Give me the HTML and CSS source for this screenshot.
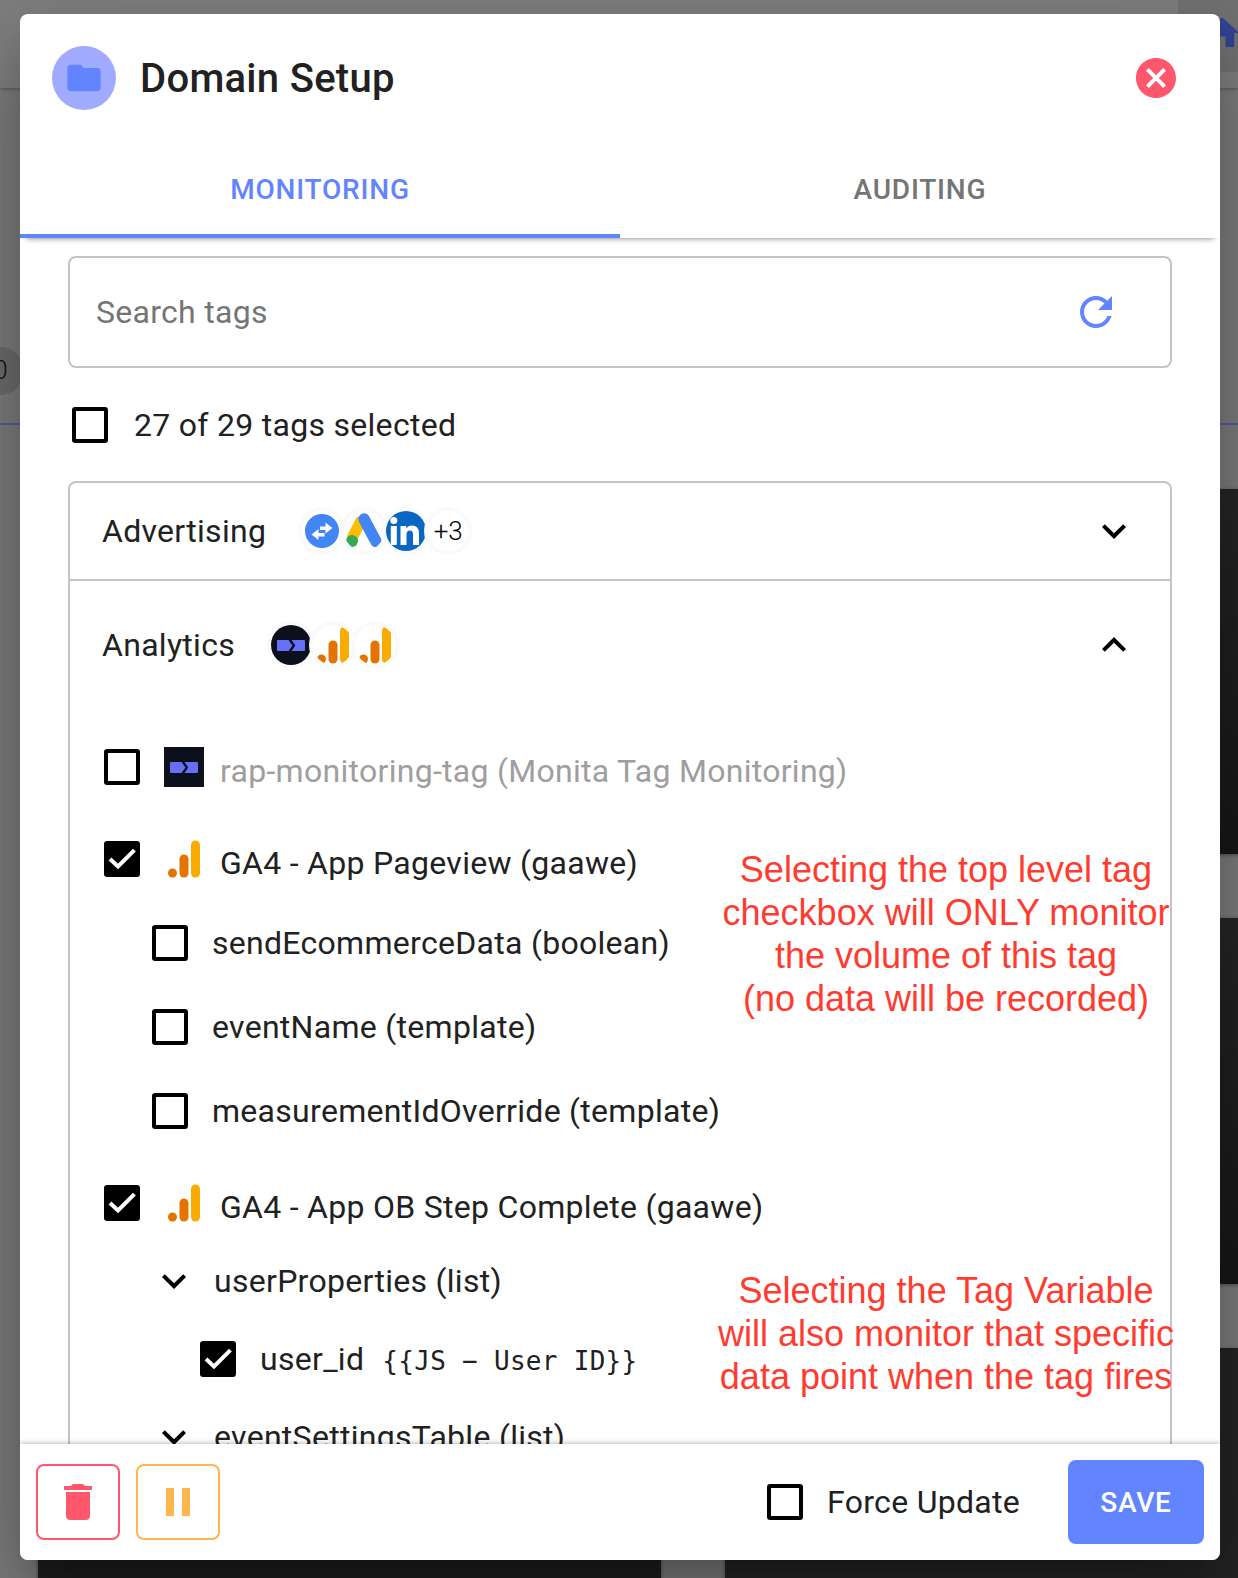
FILE: index.html
```
<!DOCTYPE html>
<html lang="en">
<head>
<meta charset="utf-8">
<title>Domain Setup</title>
<link rel="stylesheet" href="styles.css">
</head>
<body>
<svg class="defs" aria-hidden="true">
  <symbol id="box" viewBox="0 0 24 24"><rect x="4" y="4" width="16" height="16" rx=".6" fill="none" stroke="#000" stroke-width="2"/></symbol>
  <symbol id="boxon" viewBox="0 0 24 24"><rect x="3" y="3" width="18" height="18" rx="1.6"/><path d="M6 12l4 3.700 8.200-8.100" fill="none" stroke="#fff" stroke-width="2"/></symbol>
  <symbol id="down" viewBox="0 0 24 24"><path d="M7.41 8.59L12 13.17l4.59-4.58L18 10l-6 6-6-6 1.41-1.41z"/></symbol>
  <symbol id="up" viewBox="0 0 24 24"><path d="M7.41 15.41L12 10.83l4.59 4.58L18 14l-6-6-6 6z"/></symbol>
  <symbol id="ga" viewBox="0 0 40 40"><rect x="27" y="1.5" width="9" height="37" rx="4.5" fill="#f9ab00"/><rect x="15.5" y="15.5" width="9" height="23" rx="4.5" fill="#e37400"/><circle cx="8.5" cy="34" r="4.5" fill="#e37400"/></symbol>
  <symbol id="monita" viewBox="0 0 40 40"><rect width="40" height="40" fill="#0b101c"/><path d="M7 15h10.5l4 5.500-4 5.500H7q-1 0-1-1v-9q0-1 1-1zM20.500 15H33q1 0 1 1v9q0 1-1 1H20.500l3.800-5.500z" fill="#6670f6"/></symbol>
</svg>
<div class="backdrop">
  <div class="page-top"></div>
  <div class="page-user"></div>
  <svg class="home" viewBox="0 0 24 24"><path d="M10 20v-6h4v6h5v-8h3L12 3 2 12h3v8z"/></svg>
  <div class="chip">0</div>
  <div class="page-line"></div>
  <div class="tile t1"></div><div class="tile t2"></div><div class="tile t3"></div><div class="tile t4"></div>
</div>
<main class="dialog">
  <header class="head">
    <span class="badge"><svg viewBox="0 0 24 24"><path d="M10 4H4c-1.100 0-1.990.9-1.990 2L2 18c0 1.100.9 2 2 2h16c1.100 0 2-.9 2-2V8c0-1.100-.9-2-2-2h-8l-2-2z"/></svg></span>
    <h1>Domain Setup</h1>
    <svg class="close" viewBox="0 0 24 24"><path d="M12 2C6.470 2 2 6.470 2 12s4.470 10 10 10 10-4.470 10-10S17.530 2 12 2zm5 13.590L15.590 17 12 13.410 8.410 17 7 15.590 10.590 12 7 8.410 8.410 7 12 10.590 15.590 7 17 8.410 13.410 12 17 15.590z"/></svg>
  </header>
  <nav class="tabs"><span class="tab active">MONITORING</span><span class="tab">AUDITING</span></nav>
  <section class="content">
    <div class="search"><span>Search tags</span><svg class="ic blue" viewBox="0 0 24 24"><path d="M17.650 6.350C16.200 4.900 14.210 4 12 4c-4.420 0-7.990 3.580-7.990 8s3.570 8 7.990 8c3.730 0 6.840-2.550 7.730-6h-2.080c-.82 2.330-3.040 4-5.650 4-3.310 0-6-2.690-6-6s2.690-6 6-6c1.660 0 3.140.69 4.220 1.780L13 11h7V4l-2.350 2.350z"/></svg></div>
    <div class="all"><svg class="ic"><use href="#box"/></svg><span>27 of 29 tags selected</span></div>
    <div class="groups">
      <div class="group adv">
        <span class="name">Advertising</span>
        <div class="avatars">
          <span class="av"><svg viewBox="0 0 40 40"><circle cx="20" cy="20" r="17" fill="#4285f4"/><path d="M23.500 11.500l7 5.500-7 5.500v-3.500h-5.500v-3.500h5.500zM16.500 18l-7 5.500 7 5.500v-3.500h6v-3.500h-6z" fill="#fff"/></svg></span>
          <span class="av"><svg viewBox="0 0 40 40"><path d="M18 8L7.500 28" stroke="#fbbc04" stroke-width="11"/><path d="M20 8L32 30.500" stroke="#4285f4" stroke-width="11.500" stroke-linecap="round"/><circle cx="8" cy="30" r="6" fill="#34a853"/></svg></span>
          <span class="av"><svg viewBox="0 0 40 40"><rect width="40" height="40" fill="#0a66c2"/><g fill="#fff"><circle cx="7.800" cy="9.500" r="3.500"/><path d="M4.800 15h6v19h-6zM14.500 15h5.700v2.600q2-3.100 5.700-3.100 7.100 0 7.100 8V34h-6V23.800q0-4.200-3-4.200-3.500 0-3.500 4.200V34h-6z"/></g></svg></span>
          <span class="av more">+3</span>
        </div>
        <svg class="ic end"><use href="#down"/></svg>
      </div>
      <div class="group ana">
        <span class="name">Analytics</span>
        <div class="avatars">
          <span class="av"><svg><use href="#monita"/></svg></span>
          <span class="av"><svg><use href="#ga"/></svg></span>
          <span class="av"><svg><use href="#ga"/></svg></span>
        </div>
        <svg class="ic end"><use href="#up"/></svg>
      </div>
      <div class="rows">
        <div class="row tag"><svg class="ic"><use href="#box"/></svg><svg class="logo"><use href="#monita"/></svg><span class="muted">rap-monitoring-tag (Monita Tag Monitoring)</span></div>
        <div class="row tag first"><svg class="ic"><use href="#boxon"/></svg><svg class="logo"><use href="#ga"/></svg><span>GA4 - App Pageview (gaawe)</span></div>
        <div class="row field"><svg class="ic"><use href="#box"/></svg><span>sendEcommerceData (boolean)</span></div>
        <div class="row field"><svg class="ic"><use href="#box"/></svg><span>eventName (template)</span></div>
        <div class="row field"><svg class="ic"><use href="#box"/></svg><span>measurementIdOverride (template)</span></div>
        <div class="row tag second"><svg class="ic"><use href="#boxon"/></svg><svg class="logo"><use href="#ga"/></svg><span>GA4 - App OB Step Complete (gaawe)</span></div>
        <div class="row list"><svg class="ic"><use href="#down"/></svg><span>userProperties (list)</span></div>
        <div class="row leaf"><svg class="ic"><use href="#boxon"/></svg><span>user_id</span><code>{{JS − User ID}}</code></div>
        <div class="row list"><svg class="ic"><use href="#down"/></svg><span>eventSettingsTable (list)</span></div>
      </div>
    </div>
  </section>
  <footer class="foot">
    <span class="btn red"><svg class="ic" viewBox="0 0 24 24"><path d="M6 19c0 1.100.9 2 2 2h8c1.100 0 2-.9 2-2V7H6v12zM19 4h-3.500l-1-1h-5l-1 1H5v2h14V4z"/></svg></span>
    <span class="btn amber"><svg class="ic" viewBox="0 0 24 24"><path d="M6 19h4V5H6v14zm8-14v14h4V5h-4z"/></svg></span>
    <div class="force"><svg class="ic"><use href="#box"/></svg><span>Force Update</span></div>
    <span class="save">SAVE</span>
  </footer>
</main>
<p class="note n1"><span>Selecting the top level tag</span><span>checkbox will ONLY monitor</span><span>the volume of this tag</span><span>(no data will be recorded)</span></p>
<p class="note n2"><span>Selecting the Tag Variable</span><span>will also monitor that specific</span><span>data point when the tag fires</span></p>
</body>
</html>
```
FILE: styles.css
```
* { box-sizing: border-box; }
body { margin: 0; width: 1238px; height: 1578px; overflow: hidden; position: relative; padding: 14px 18px 18px 20px; background: #7c7c7c; font-family: Roboto, sans-serif; font-size: 32px; letter-spacing: .29px; color: #212121; }
svg { display: block; flex: none; }
.defs { position: absolute; width: 0; height: 0; }

.backdrop { position: absolute; inset: 0; overflow: hidden; background: #7c7c7c; }
.backdrop > * { position: absolute; }
.page-top { left: 0; top: 0; width: 100%; height: 88px; background: #7f7f7f; box-shadow: 0 1px 4px rgba(0,0,0,.3); }
.page-user { left: 1178px; top: 0; width: 60px; height: 72px; background: #727272; }
.home { left: 1201px; top: 12px; width: 42px; height: 42px; fill: #314496; }
.chip { left: -56px; top: 347px; width: 80px; height: 48px; border-radius: 24px; background: #6c6c6c; color: #111; font-size: 26px; font-weight: 300; line-height: 47px; text-align: right; padding-right: 16px; }
.page-line { left: 0; top: 423px; width: 100%; height: 2px; background: #535ba3; }
.tile { background: #242424; box-shadow: 0 1px 4px rgba(0,0,0,.4); }
.t1 { left: 725px; top: 489px; width: 600px; height: 365px; background: linear-gradient(#262626, #171717); }
.t2 { left: 725px; top: 918px; width: 600px; height: 366px; background: linear-gradient(#262626, #171717); }
.t3 { left: 725px; top: 1348px; width: 600px; height: 300px; }
.t4 { left: 38px; top: 1348px; width: 623px; height: 300px; background: #1e1e1e; }

.dialog { position: relative; width: 1200px; height: 1546px; display: flex; flex-direction: column; overflow: hidden; border-radius: 8px; background: #fff; box-shadow: 0 22px 30px -14px rgba(0,0,0,.2), 0 48px 76px 6px rgba(0,0,0,.14), 0 18px 92px 16px rgba(0,0,0,.12); }
.ic { width: 48px; height: 48px; }
.blue { fill: #6285ff; }
.head { height: 128px; display: flex; align-items: center; padding: 0 40px 0 32px; }
.badge { width: 64px; height: 64px; border-radius: 50%; background: #a0abff; display: grid; place-items: center; }
.badge svg { width: 40px; height: 40px; fill: #6285ff; }
h1 { flex: 1; margin: 0 0 0 24px; padding-top: 1px; font-size: 40px; font-weight: 500; line-height: 64px; }
.close { width: 48px; height: 48px; fill: #ff586d; }
.tabs { height: 96px; flex: none; display: flex; z-index: 1; background: #fff; box-shadow: 0 6px 6px -6px rgba(0,0,0,.55); }
.tab { flex: 1; text-align: center; line-height: 95px; font-size: 28px; font-weight: 500; letter-spacing: .8px; color: #757575; }
.active { color: #6285ff; border-bottom: 4px solid #6285ff; }
.content { flex: 1; min-height: 0; overflow: hidden; padding: 18px 48px 0; }
.search { height: 112px; border: 2px solid #c4c4c4; border-radius: 8px; display: flex; align-items: center; justify-content: space-between; padding: 0 50px 0 26px; color: #757575; }
.all { height: 113px; display: flex; align-items: center; gap: 20px; }
.all .ic { margin-left: -2px; }
.groups { border: 2px solid #c4c4c4; border-radius: 8px; height: 1200px; }
.group { display: flex; align-items: center; padding: 0 32px; }
.adv { height: 98px; border-bottom: 2px solid #c4c4c4; }
.ana { height: 128px; }
.avatars { display: flex; margin-left: 32px; }
.av { width: 48px; height: 48px; border: 4px solid #fafafa; border-radius: 50%; overflow: hidden; background: #fff; margin-right: -6px; }
.av svg { width: 40px; height: 40px; }
.more { font-size: 26px; font-weight: 300; line-height: 40px; text-align: center; letter-spacing: 0; color: #000; }
.end { margin-left: auto; }
.rows { padding-top: 12px; }
.row { display: flex; align-items: center; height: 84px; }
.tag { height: 92px; padding-left: 28px; }
.tag .logo { width: 40px; height: 40px; margin: 0 16px 0 18px; }
.tag span { padding-top: 8px; }
.first { margin-bottom: -4px; }
.muted { color: #9e9e9e; }
.field { padding-left: 76px; gap: 18px; }
.second { height: 100px; }
.list { height: 56px; padding-left: 80px; gap: 16px; }
.leaf { height: 100px; padding-left: 124px; gap: 18px; }
code { font: 26px "DejaVu Sans Mono", monospace; letter-spacing: .3px; padding-top: 4px; }
.foot { height: 116px; flex: none; z-index: 1; display: flex; align-items: center; gap: 16px; padding: 0 16px; background: #fff; box-shadow: 0 0 6px rgba(0,0,0,.35); }
.btn { width: 84px; height: 76px; border: 2px solid; border-radius: 8px; display: grid; place-items: center; }
.btn svg { fill: currentColor; }
.red { color: #ff586d; }
.amber { color: #ffb550; }
.force { margin-left: auto; margin-right: 32px; display: flex; align-items: center; gap: 18px; }
.save { width: 136px; height: 84px; border-radius: 8px; background: #6285ff; color: #fff; font-size: 28px; font-weight: 500; letter-spacing: .8px; line-height: 86px; text-align: center; }

.note { position: absolute; margin: 0; left: 706px; width: 480px; text-align: center; font: 36px/43px "Liberation Sans", Arial, sans-serif; letter-spacing: 0; color: #ff3b30; }
.note span { display: block; white-space: nowrap; }
.n1 { top: 848px; }
.n2 { top: 1269px; }
```
